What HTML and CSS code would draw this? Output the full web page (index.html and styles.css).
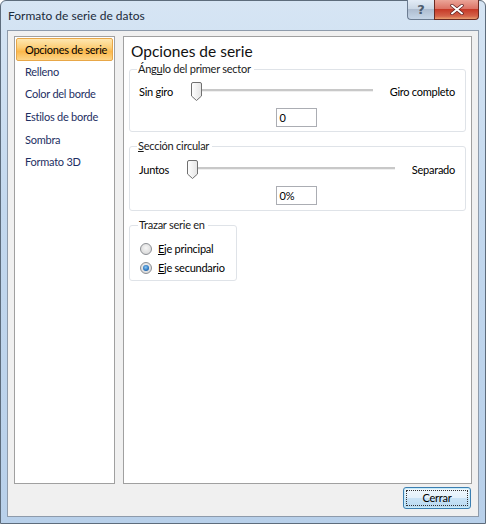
FILE: index.html
```html
<!DOCTYPE html>
<html lang="es">
<head>
<meta charset="utf-8">
<title>Formato de serie de datos</title>
<link rel="stylesheet" href="styles.css">
</head>
<body>
<div class="window">
  <div class="titlebar">
    <span class="title">Formato de serie de datos</span>
    <div class="caption-buttons">
      <span class="cbtn help">?</span>
      <span class="cbtn close">
        <svg width="14" height="11" viewBox="0 0 14 11"><path d="M2 1.5 L12 9.5 M12 1.5 L2 9.5" stroke="#5a1f1f" stroke-width="3.4" stroke-linecap="round"/><path d="M2 1.5 L12 9.5 M12 1.5 L2 9.5" stroke="#ffffff" stroke-width="2" stroke-linecap="round"/></svg>
      </span>
    </div>
  </div>
  <div class="client">
    <div class="main">
      <ul class="nav">
        <li class="nav-item selected">Opciones de serie</li>
        <li class="nav-item">Relleno</li>
        <li class="nav-item">Color del borde</li>
        <li class="nav-item">Estilos de borde</li>
        <li class="nav-item">Sombra</li>
        <li class="nav-item">Formato 3D</li>
      </ul>
      <div class="panel">
        <h1 class="heading">Opciones de serie</h1>
        <fieldset class="group g1">
          <legend>Áng<u>u</u>lo del primer sector</legend>
          <div class="slider-row">
            <span class="slabel l1">Sin giro</span>
            <div class="slider">
              <svg class="thumb" width="11" height="19" viewBox="0 0 11 19"><defs><linearGradient id="tg" x1="0" y1="0" x2="1" y2="0"><stop offset="0" stop-color="#ffffff"/><stop offset="1" stop-color="#e4e4e4"/></linearGradient></defs><path d="M2 0.5 H9 Q10.5 0.5 10.5 2 V14 L5.5 18.5 L0.5 14 V2 Q0.5 0.5 2 0.5 Z" fill="url(#tg)" stroke="#707070"/></svg>
              <div class="track"></div>
            </div>
            <span class="slabel r">Giro completo</span>
          </div>
          <div class="input-row"><span class="textbox">0</span></div>
        </fieldset>
        <fieldset class="group g2">
          <legend><u>S</u>ección circular</legend>
          <div class="slider-row">
            <span class="slabel l2">Juntos</span>
            <div class="slider">
              <svg class="thumb" width="11" height="19" viewBox="0 0 11 19"><path d="M2 0.5 H9 Q10.5 0.5 10.5 2 V14 L5.5 18.5 L0.5 14 V2 Q0.5 0.5 2 0.5 Z" fill="url(#tg)" stroke="#707070"/></svg>
              <div class="track"></div>
            </div>
            <span class="slabel r">Separado</span>
          </div>
          <div class="input-row"><span class="textbox">0%</span></div>
        </fieldset>
        <fieldset class="group g3">
          <legend>Trazar serie en</legend>
          <div class="radio-row"><span class="radio"></span><span><u>E</u>je principal</span></div>
          <div class="radio-row"><span class="radio checked"><span class="dot"></span></span><span><u>E</u>je secundario</span></div>
        </fieldset>
      </div>
    </div>
    <div class="footer">
      <button class="btn"><span class="focus">Cerrar</span></button>
    </div>
  </div>
</div>
</body>
</html>
```
FILE: styles.css
```css
* { box-sizing: border-box; }
html, body { margin: 0; padding: 0; }
body {
  width: 486px;
  height: 524px;
  overflow: hidden;
  font-family: Lato, "Liberation Sans", sans-serif;
  font-size: 11px;
  letter-spacing: -0.25px;
  color: #000;
}
.window {
  width: 486px;
  height: 524px;
  display: flex;
  flex-direction: column;
  padding: 0 6px 6px 6px;
  background: linear-gradient(180deg, #d6e5f4 0%, #c3d8ee 40%, #b8d0ea 100%);
  border: 1px solid #5d6c7c;
  border-radius: 6px 6px 0 0;
}
.titlebar {
  height: 29px;
  display: flex;
  align-items: flex-start;
  flex-shrink: 0;
}
.title {
  margin-top: 7px;
  margin-left: 1px;
  font-size: 12px;
  letter-spacing: 0;
  color: #1b2a3a;
}
.caption-buttons {
  margin-left: auto;
  margin-right: 0;
  display: flex;
  margin-top: -1px;
}
.cbtn {
  height: 20px;
  display: flex;
  align-items: center;
  justify-content: center;
  border: 1px solid #6c7d92;
  border-top: none;
}
.help {
  width: 27px;
  border-right: none;
  border-radius: 0 0 0 4px;
  background: linear-gradient(180deg, #e3ecf6 0%, #cbd8e6 45%, #aebdd0 50%, #c6d6e8 100%);
  color: #4d5c6e;
  font-weight: bold;
  font-size: 13px;
  font-family: "DejaVu Sans", sans-serif;
}
.close {
  width: 45px;
  border-color: #6a2a22;
  border-radius: 0 0 4px 0;
  background: linear-gradient(180deg, #eba598 0%, #dc7466 45%, #c63a28 50%, #d4634a 85%, #e9a070 100%);
}
.client {
  flex: 1;
  display: flex;
  flex-direction: column;
  background: #f0f0f0;
  border: 1px solid #8e9bab;
  padding: 5px 6px 7px 6px;
}
.main {
  flex: 1;
  display: flex;
  gap: 8px;
}
.nav {
  width: 101px;
  margin: 0;
  padding: 1px;
  list-style: none;
  background: #fff;
  border: 1px solid #a0a0a0;
}
.nav-item {
  height: 22.7px;
  line-height: 22px;
  padding-left: 9px;
  color: #1e2f63;
  white-space: nowrap;
}
.nav-item.selected {
  padding-left: 8px;
  color: #000;
  border: 1px solid #e8a748;
  border-radius: 2px;
  background: linear-gradient(180deg, #fee7b0 0%, #fccf7a 40%, #fbb84c 60%, #fdd68a 100%);
}
.panel {
  flex: 1;
  background: #fff;
  border: 1px solid #a0a0a0;
  padding: 4px 5px 0 5px;
}
.heading {
  margin: 0 0 0 2px;
  font-size: 15.5px;
  font-weight: normal;
  line-height: 20px;
  letter-spacing: 0;
  color: #111;
}
.group {
  margin: 0;
  border: 1px solid #dfe3e8;
  border-radius: 3px;
  padding: 5px 10px 4px 9px;
}
.group legend {
  padding: 0 3px 0 1px;
  margin-left: -2px;
  line-height: 16px;
  color: #1a1a1a;
}
.g2 { margin-top: 6px; padding-top: 6px; padding-bottom: 5px; }
.g3 { margin-top: 6px; width: 108px; padding: 6px 6px 3px 10px; }
.slider-row {
  display: flex;
  align-items: center;
  height: 19px;
}
.slabel { white-space: nowrap; }
.l1 { width: 52px; }
.l2 { width: 48px; }
.slider {
  flex: 1;
  display: flex;
  align-items: center;
  margin-right: 17px;
}
.thumb { flex-shrink: 0; display: block; }
.track {
  flex: 1;
  height: 2px;
  margin-top: -2px;
  background: #c8c8c8;
  border-bottom: 1px solid #efefef;
  box-sizing: content-box;
}
.input-row {
  display: flex;
  justify-content: center;
  margin-top: 7px;
  padding-right: 2px;
}
.textbox {
  width: 41px;
  height: 19px;
  border: 1px solid #abadb3;
  padding-left: 3px;
  line-height: 17px;
  background: #fff;
}
.radio-row {
  display: flex;
  align-items: center;
  gap: 6px;
  height: 19px;
  white-space: nowrap;
}
.radio {
  width: 12px;
  height: 12px;
  flex-shrink: 0;
  border-radius: 50%;
  border: 1px solid #8c8f94;
  background: radial-gradient(circle at 50% 40%, #f6f6f6 0%, #dcdcdc 70%, #cfd0d2 100%);
  display: flex;
  align-items: center;
  justify-content: center;
}
.radio .dot {
  width: 6px;
  height: 6px;
  border-radius: 50%;
  background: radial-gradient(circle at 45% 40%, #8ec9f0 0%, #2e79c4 55%, #124a8a 100%);
}
.footer {
  display: flex;
  justify-content: flex-end;
  padding-top: 3px;
}
.btn {
  width: 68px;
  height: 22px;
  margin-right: 1px;
  padding: 2px;
  font: inherit;
  letter-spacing: inherit;
  color: #000;
  border: 1px solid #3c7fb1;
  border-radius: 3px;
  background: linear-gradient(180deg, #f1f8fd 0%, #e3f1fb 50%, #c9e3f6 51%, #b8daf3 100%);
  box-shadow: inset 0 0 0 1px #c7ecfb;
}
.focus {
  display: block;
  height: 100%;
  line-height: 14px;
  border: 1px dotted #333;
}
```
